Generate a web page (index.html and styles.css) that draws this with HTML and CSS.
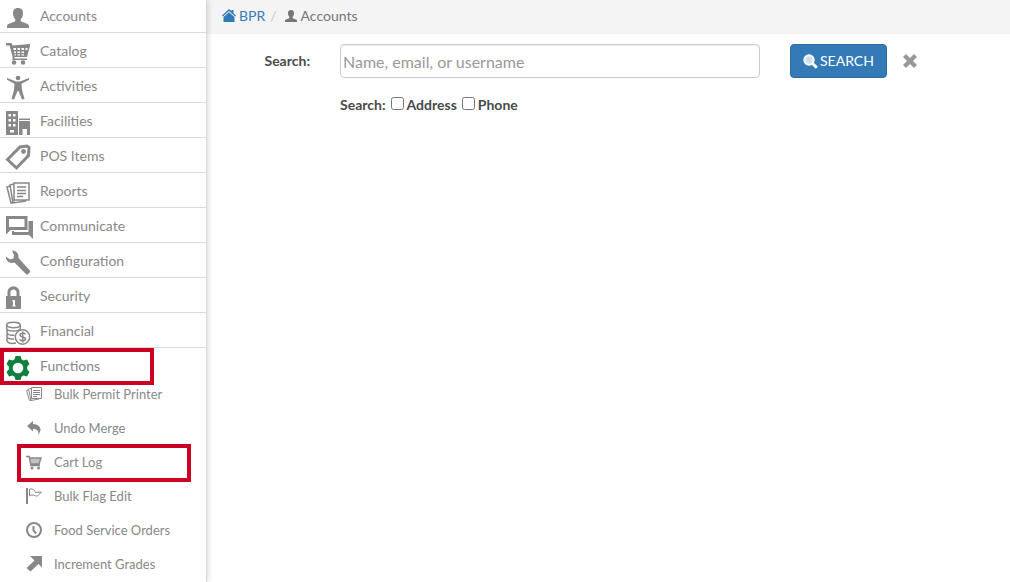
FILE: index.html
```
<!DOCTYPE html>
<html lang="en">
<head>
<meta charset="utf-8">
<meta name="viewport" content="width=device-width, initial-scale=1">
<title>Accounts</title>
<link rel="stylesheet" href="styles.css">
</head>
<body>
<div class="app">
<nav class="sidebar" aria-label="Main">
  <ul class="menu">
    <li><a class="menu-link" href="#"><svg class="icon" viewBox="0 0 28 28"><path d="M13 4c3.700 0 5 2.100 5 5.200 0 2.800-.8 4.500-2.200 5.700v2.400l6.700 2.800c1.300.7 1.500 1.700 1.500 3.900H2c0-2.200.2-3.200 1.500-3.900l6.700-2.800v-2.400C8.800 13.700 8 12 8 9.200 8 6.100 9.300 4 13 4z"/></svg>Accounts</a></li>
    <li><a class="menu-link" href="#"><svg class="icon" viewBox="0 0 28 28"><path fill-rule="evenodd" d="M1 4h5.500l1 2.500L25 5v2l-3 11H9.500v1.500H22V21H7.500v-3.500L4.500 6.500H1zM8.500 9v2H11V9zm4 0v2H15V9zm4 0v2H19V9zm4 0v2h1.800l.5-2zM9 12.500v1.500h2v-1.500zm3.500 0v1.500H15v-1.500zm4 0v1.500H19v-1.500zM9.500 15.300v1.200H11v-1.200zm3 0v1.200H15v-1.200zm4 0v1.200H19v-1.200z"/><circle cx="9" cy="23.500" r="2.300"/><circle cx="18" cy="23.500" r="2.300"/></svg>Catalog</a></li>
    <li><a class="menu-link" href="#"><svg class="icon" viewBox="0 0 28 28"><circle cx="13" cy="4" r="2.300"/><path d="M2 4l9 3.500h4L24 4v1.800l-7.500 4L17 16l2.500 9-2.500.5-3.500-8.500h-1L9 25.500 6.500 25 9 16l.5-6.200L2 5.800z"/></svg>Activities</a></li>
    <li><a class="menu-link" href="#"><svg class="icon" viewBox="0 0 28 28"><path fill-rule="evenodd" d="M1 2h12v24H1zm2.500 3v2.500H6V5zM8 5v2.500h2.500V5zM3.500 10v2.500H6V10zM8 10v2.500h2.500V10zm-4.500 5v2.500H6V15zM8 15v2.500h2.500V15zm-3 6v2.500h4V21zM14 9.500h11V11H14zm0 2.500h11v14h-3v-6h-4.500v6H14z"/></svg>Facilities</a></li>
    <li><a class="menu-link" href="#"><svg class="icon" viewBox="0 0 28 28"><path class="line thick" d="M2.500 15.500L15 3l7-1 2 1.500-.5 8L11.500 24z"/><circle cx="18.500" cy="7.500" r="2.400"/></svg>POS Items</a></li>
    <li><a class="menu-link" href="#"><svg class="icon" viewBox="0 0 28 28"><path class="line medium" d="M9 4h15v17H9zM9 5L5 6l3 18 13-2M5 7L2 8l4 16 4-1M12 8h9M12 11.500h9M12 14.500h9M12 17.500h6"/></svg>Reports</a></li>
    <li><a class="menu-link" href="#"><svg class="icon" viewBox="0 0 28 28"><path class="line thick" d="M2.500 3.500h18.500v11H5L2.500 17z"/><path d="M23.500 7H28v18l-4-4H7v-4h2v1h14.500z"/></svg>Communicate</a></li>
    <li><a class="menu-link" href="#"><svg class="icon" viewBox="0 0 28 28"><path d="M7 1.500c4 0 7 3 6.500 7.500l11 12c1 1 .8 2 0 2.800l-1.300 1.100c-.8.700-1.700.7-2.500-.2L9.500 13.500C5 15 1 12.500.8 7.500l4.200 3 3.500-1L9 6z"/></svg>Configuration</a></li>
    <li><a class="menu-link" href="#"><svg class="icon" viewBox="0 0 28 28"><path fill-rule="evenodd" d="M1 12h1.500V8c0-7.500 12-7.500 12 0v4H16v13H1zm4.500 0h6V8c0-3.500-6-3.500-6 0zM7.500 16v2h.5v3h-.5v1.500h3V21h-.5v-5z"/></svg>Security</a></li>
    <li><a class="menu-link" href="#"><svg class="icon" viewBox="0 0 28 28"><g class="line medium"><ellipse cx="8.500" cy="6" rx="6.800" ry="2.700"/><path d="M1.700 6v3.500c0 3.400 13.600 3.400 13.600 0V6M2 11v3c1 2 4 2.600 7.500 2.200M2 15v3c1 2 4 2.300 7 2M2 19v3c1 2 5 2.800 9 2"/><circle cx="17.500" cy="18" r="7.200"/><path d="M20.500 15.500c-1-2-5.500-1.800-5.500.5 0 2.500 5.500 1.500 5.500 4 0 2.300-5 2.300-6 .2M17.700 12.500v11"/></g></svg>Financial</a></li>
    <li class="menu-open marked marked-functions">
      <a class="menu-link" href="#" aria-expanded="true"><svg class="icon icon-active" viewBox="0 0 28 28"><path fill-rule="evenodd" d="M10.500 2h5l1 3.200 2 1.200 3.500-.8 2.500 4.300-2.300 2.600v3l2.300 2.600-2.500 4.300-3.500-.8-2 1.200-1 3.200h-5l-1-3.200-2-1.200-3.500.8-2.500-4.300 2.300-2.600v-3L1.500 9.900 4 5.600l3.500.8 2-1.200zM13 8.700a5.300 5.300 0 1 0 0 10.600 5.300 5.300 0 0 0 0-10.600z"/></svg>Functions</a>
    </li>
  </ul>
  <ul class="submenu">
    <li><a class="sub-link" href="#"><svg class="icon-small" viewBox="0 0 16 16"><path class="line thin" d="M5.500 1.500h10v11h-10zM5 2.500L2.500 3 5 14.500l8-1.500M2.500 3.500L.5 4.500l3 10 2-.5M7 4.500h7M7 6.500h7M7 8.500h7M7 10.500h4"/></svg>Bulk Permit Printer</a></li>
    <li><a class="sub-link" href="#"><svg class="icon-small" viewBox="0 0 16 16"><path d="M1 6l6-5v3c5 0 8 3 7.500 6.500L12.500 15C13 11 11 9 7 9v2.500z"/></svg>Undo Merge</a></li>
    <li class="marked marked-cart"><a class="sub-link" href="#"><svg class="icon-small" viewBox="0 0 16 16"><path class="soft" d="M4 4h11l-2 6H5z"/><path class="line medium" d="M0 2.500h3.200L5 11.500h9M4 4h11l-2 6H5"/><circle cx="6" cy="14" r="1.500"/><circle cx="12.500" cy="14" r="1.500"/></svg>Cart Log</a></li>
    <li><a class="sub-link" href="#"><svg class="icon-small" viewBox="0 0 16 16"><path d="M0 0h2v16H0z"/><path class="line thin" d="M3.500 1c4-.5 5 1 6 3.500l6-.5-4 4C9 8.500 7 5.500 3.500 8z"/></svg>Bulk Flag Edit</a></li>
    <li><a class="sub-link" href="#"><svg class="icon-small" viewBox="0 0 16 16"><circle class="line" cx="8" cy="8" r="7"/><path class="line" d="M7.500 4v4.500l2.500 3"/></svg>Food Service Orders</a></li>
    <li><a class="sub-link" href="#"><svg class="icon-small" viewBox="0 0 16 16"><path d="M4 0h12v11.500L12.500 8l-8 7.500L.5 12l8-7.500z"/></svg>Increment Grades</a></li>
  </ul>
</nav>
<main class="content">
  <nav class="breadcrumb" aria-label="Breadcrumb">
    <a class="crumb crumb-link" href="#"><svg class="icon-crumb" viewBox="0 0 14 14"><path d="M7 0l2.500 2.300V1h2v3.200L14 6.500l-.8 1L7 2 .8 7.500l-.8-1zM7 3.200L12.500 8v5h-11V8z"/></svg>BPR</a>
    <span class="slash">/</span>
    <span class="crumb"><svg class="icon-crumb" viewBox="0 0 14 14"><path d="M7 1c2.300 0 3 1.300 3 3.200 0 1.500-.5 2.500-1.300 3.300v1.700l3.300 1.300c1 .4 1 1.100 1 2.500H1c0-1.400 0-2.100 1-2.500l3.300-1.300V7.500C4.500 6.700 4 5.700 4 4.200 4 2.300 4.700 1 7 1z"/></svg>Accounts</span>
  </nav>
  <form class="search-form">
    <label class="field-label" for="query">Search:</label>
    <input class="query" id="query" type="text" placeholder="Name, email, or username">
    <div class="actions">
      <button class="search-button" type="button"><svg class="icon-search" viewBox="0 0 15 15"><circle class="lens" cx="6" cy="6" r="4.700"/><path class="handle" d="M9.800 9.800l4 4"/></svg>SEARCH</button>
      <button class="clear-button" type="button" aria-label="Clear"><svg class="icon-clear" viewBox="0 0 14 14"><path d="M3 0l4 4 4-4 3 3-4 4 4 4-3 3-4-4-4 4-3-3 4-4-4-4z"/></svg></button>
    </div>
    <div class="options">
      <span>Search:</span>
      <label class="option"><input class="check" type="checkbox">Address</label>
      <label class="option"><input class="check" type="checkbox">Phone</label>
    </div>
  </form>
</main>
</div>
</body>
</html>
```
FILE: styles.css
```
*, *::after { box-sizing: border-box; }
body {
  margin: 0;
  background: #fff;
  color: #4a4a4a;
  font: 14px/20px Lato, sans-serif;
}
a { color: inherit; text-decoration: none; }
svg { fill: currentColor; flex: none; }
.line { fill: none; stroke: currentColor; stroke-width: 2; }
.thin { stroke-width: 1; }
.medium { stroke-width: 1.5; }
.thick { stroke-width: 3; }
.soft { opacity: 0.5; }

.app { display: flex; height: 100vh; overflow: hidden; }
.sidebar {
  position: relative;
  z-index: 1;
  flex: none;
  width: 207px;
  border-right: 1px solid #d9d9d9;
  box-shadow: 1px 0 6px rgba(0, 0, 0, 0.15);
  background: #fff;
  color: #888;
}
.menu, .submenu { margin: 0; padding: 0; list-style: none; }
.menu { margin-top: -2px; }
.menu > li { height: 35px; border-bottom: 1px solid #d9d9d9; }
.menu > .menu-open { height: 29px; border-bottom: 0; }
.menu-link { display: flex; align-items: center; gap: 7px; height: 36px; padding-left: 5px; }
.icon { width: 28px; height: 28px; margin-top: 3px; }
.icon-active { color: #11803f; }
.sub-link { display: flex; align-items: center; gap: 12px; height: 34px; padding-left: 26px; font-size: 13px; }
.icon-small { width: 16px; height: 16px; }

.marked { position: relative; }
.marked::after {
  content: "";
  position: absolute;
  border: 4px solid #cc0022;
  pointer-events: none;
}
.marked-functions::after { top: 0; left: 0; width: 154px; height: 37px; }
.marked-cart::after { top: -1px; left: 17px; width: 174px; height: 38px; }

.content { flex: 1; min-width: 0; }
.breadcrumb {
  display: flex;
  align-items: center;
  gap: 5px;
  height: 34px;
  padding: 0 15px 2px;
  background: #f4f4f4;
  color: #777;
}
.crumb { display: flex; align-items: center; gap: 3px; }
.slash { color: #ccc; }
.slash + .crumb { margin-left: 2px; }
.crumb-link { color: #337ab7; }
.icon-crumb { width: 14px; height: 14px; }

.search-form {
  display: grid;
  grid-template-columns: 103px minmax(0, 1fr) 220px;
  column-gap: 30px;
  row-gap: 17px;
  padding-top: 10px;
}
.field-label, .options { font-weight: 700; }
.field-label { padding-top: 7px; text-align: right; }
.query {
  width: 100%;
  height: 34px;
  padding: 0 2px;
  border: 1px solid #ccc;
  border-radius: 4px;
  box-shadow: inset 0 1px 1px rgba(0, 0, 0, 0.075);
  background: #fff;
  color: #555;
  font: 16px/20px Lato, sans-serif;
}
.query::placeholder { color: #999; opacity: 1; }
.actions { display: flex; align-items: center; gap: 16px; }
.search-button {
  display: flex;
  align-items: center;
  gap: 2px;
  height: 34px;
  padding: 0 12px;
  border: 1px solid #2e6da4;
  border-radius: 4px;
  background: #337ab7;
  color: #fff;
  font: 14px/20px Lato, sans-serif;
}
.icon-search { width: 15px; height: 15px; }
.lens { fill: #cde0f0; stroke: #fff; stroke-width: 2; }
.handle { stroke: #fff; stroke-width: 3; }
.clear-button { display: flex; padding: 0; border: 0; background: none; color: #999; }
.icon-clear { width: 14px; height: 14px; }
.options { grid-column: 2 / -1; display: flex; align-items: center; gap: 5px; }
.option { display: flex; align-items: center; gap: 3px; }
.check { width: 13px; height: 13px; margin: 0 0 3px; }
```
